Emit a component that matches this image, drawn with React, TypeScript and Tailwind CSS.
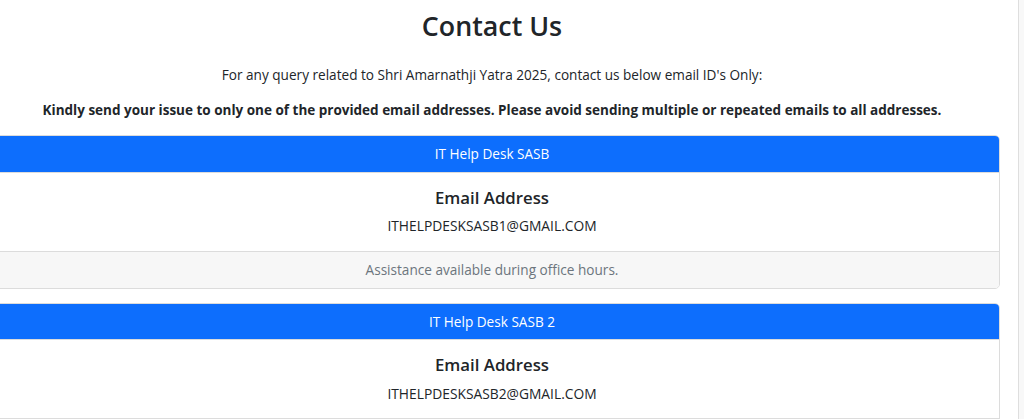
import React from "react";

const cards = [
  { title: "IT Help Desk SASB", email: "ITHELPDESKSASB1@GMAIL.COM" },
  { title: "IT Help Desk SASB 2", email: "ITHELPDESKSASB2@GMAIL.COM" },
];

export default function App() {
  return (
    <div
      className="flex h-[419px] w-[1024px] overflow-hidden bg-white text-[#212529]"
      style={{ fontFamily: '"Open Sans", "Noto Sans", sans-serif' }}
    >
      <div className="w-[1018px] shrink-0 overflow-hidden">
        <div className="ml-[-16px] w-[1016px] text-center">
          <h2 className="mt-[8px] mb-[21px] text-[26.8px] leading-[35px] font-semibold">Contact Us</h2>
          <p className="mb-[14px] text-[13.6px] leading-[21.6px]">
            For any query related to Shri Amarnathji Yatra 2025, contact us below email ID's Only:
          </p>
          <p className="mb-[14px] text-[13.5px] leading-[21.6px] font-bold">
            Kindly send your issue to only one of the provided email addresses. Please avoid sending multiple or repeated emails to all addresses.
          </p>
          {cards.map((c) => (
            <div key={c.title} className="mb-[14px] overflow-hidden rounded-[5px] border border-[#dcdcdc]">
              <div className="border-b border-[#dcdcdc] bg-[#0d6efd] py-[7px] text-[13.6px] leading-[21.6px] text-white">
                {c.title}
              </div>
              <div className="py-[14px]">
                <h5 className="mb-[7px] text-[16.8px] leading-[21.6px] font-semibold">Email Address</h5>
                <p className="text-[13.8px] leading-[21.6px]">{c.email}</p>
              </div>
              <div className="border-t border-[#dcdcdc] bg-[#f7f7f7] py-[7px] text-[13.6px] leading-[21.6px] text-[#6c757d]">
                Assistance available during office hours.
              </div>
            </div>
          ))}
        </div>
      </div>
      <div className="flex-1 border-l border-[#dedede] bg-[#f8f8f8]" />
    </div>
  );
}
